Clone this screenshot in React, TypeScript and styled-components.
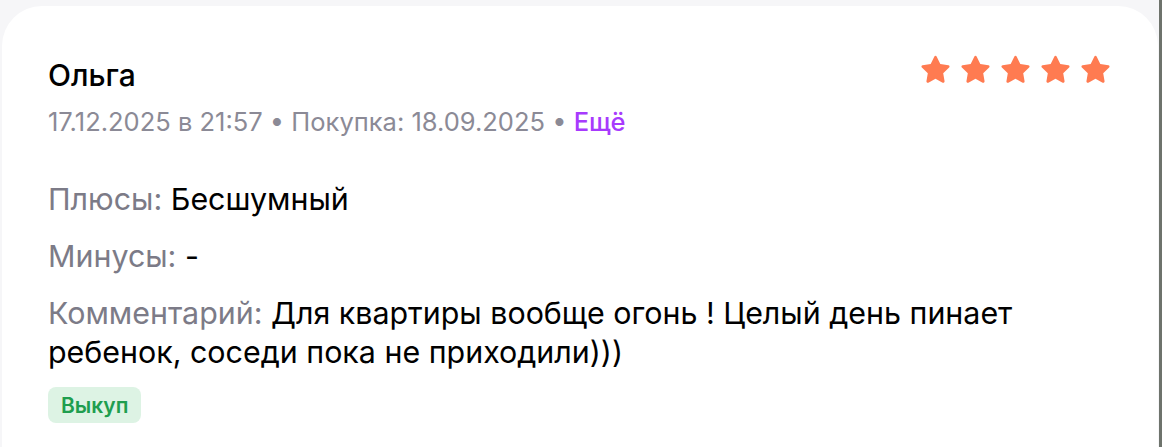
import * as React from 'react';
import styled, { createGlobalStyle } from 'styled-components';

const GlobalStyle = createGlobalStyle`
  html, body {
    margin: 0;
    padding: 0;
    background: #f6f6f8;
    font-family: Inter, "Noto Sans", sans-serif;
  }
`;

const review = {
  author: 'Ольга',
  date: '17.12.2025 в 21:57',
  purchase: 'Покупка: 18.09.2025',
  rating: 5,
  pros: 'Бесшумный',
  cons: '-',
  comment: 'Для квартиры вообще огонь ! Целый день пинает ребенок, соседи пока не приходили)))',
  badge: 'Выкуп',
};

const Star = () => (
  <svg width="33" height="32" viewBox="0 0 24 23" aria-hidden="true">
    <path
      d="M12 1.2c.4 0 .7.2.9.6l2.6 5.4 5.9.8c.8.1 1.1 1.1.5 1.7l-4.3 4.1 1 5.9c.1.8-.7 1.4-1.4 1l-5.2-2.8-5.2 2.8c-.7.4-1.5-.2-1.4-1l1-5.9L2.1 9.7c-.6-.6-.3-1.6.5-1.7l5.9-.8 2.6-5.4c.2-.4.5-.6.9-.6z"
      fill="#ff7b51"
    />
  </svg>
);

export default function App() {
  return (
    <>
      <GlobalStyle />
      <Page>
        <Card>
          <Header>
            <div>
              <Author>{review.author}</Author>
              <Meta>
                {review.date} • {review.purchase} • <More>Ещё</More>
              </Meta>
            </div>
            <Stars>
              {Array.from({ length: review.rating }).map((_, i) => (
                <Star key={i} />
              ))}
            </Stars>
          </Header>
          <Body>
            <Field>
              <Label>Плюсы:</Label> {review.pros}
            </Field>
            <Field>
              <Label>Минусы:</Label> {review.cons}
            </Field>
            <Field>
              <Label>Комментарий:</Label> {review.comment}
            </Field>
          </Body>
          <Badge>{review.badge}</Badge>
        </Card>
        <Edge />
      </Page>
    </>
  );
}

const Page = styled.div`
  display: flex;
  min-height: 447px;
  padding: 6px 0 0 2px;
  box-sizing: border-box;
`;

const Card = styled.article`
  flex: 1;
  background: #fff;
  border-radius: 40px 40px 0 0;
  padding: 51px 46px 0 46px;
  color: #000;
`;

const Edge = styled.div`
  width: 3px;
  margin-left: 1px;
  margin-top: -6px;
  background: #6e736c;
`;

const Header = styled.header`
  display: flex;
  justify-content: space-between;
  align-items: flex-start;
`;

const Author = styled.h3`
  margin: 0;
  font-size: 30px;
  line-height: 36px;
  font-weight: 500;
`;

const Meta = styled.div`
  margin-top: 13px;
  font-size: 25.5px;
  line-height: 32px;
  color: #8b8a96;
`;

const More = styled.span`
  color: #a73afd;
  font-weight: 500;
`;

const Stars = styled.div`
  display: flex;
  gap: 7px;
  margin-top: -3px;
`;

const Body = styled.div`
  display: flex;
  flex-direction: column;
  gap: 18px;
  margin-top: 42px;
`;

const Field = styled.p`
  margin: 0;
  font-size: 30.4px;
  line-height: 39px;
  max-width: 1030px;
`;

const Label = styled.span`
  color: #7c7b87;
`;

const Badge = styled.span`
  display: inline-flex;
  align-items: center;
  height: 36px;
  padding: 0 13px;
  margin-top: 15px;
  border-radius: 8px;
  background: #ddf3e4;
  color: #1f9e4f;
  font-size: 21px;
  font-weight: 600;
`;
